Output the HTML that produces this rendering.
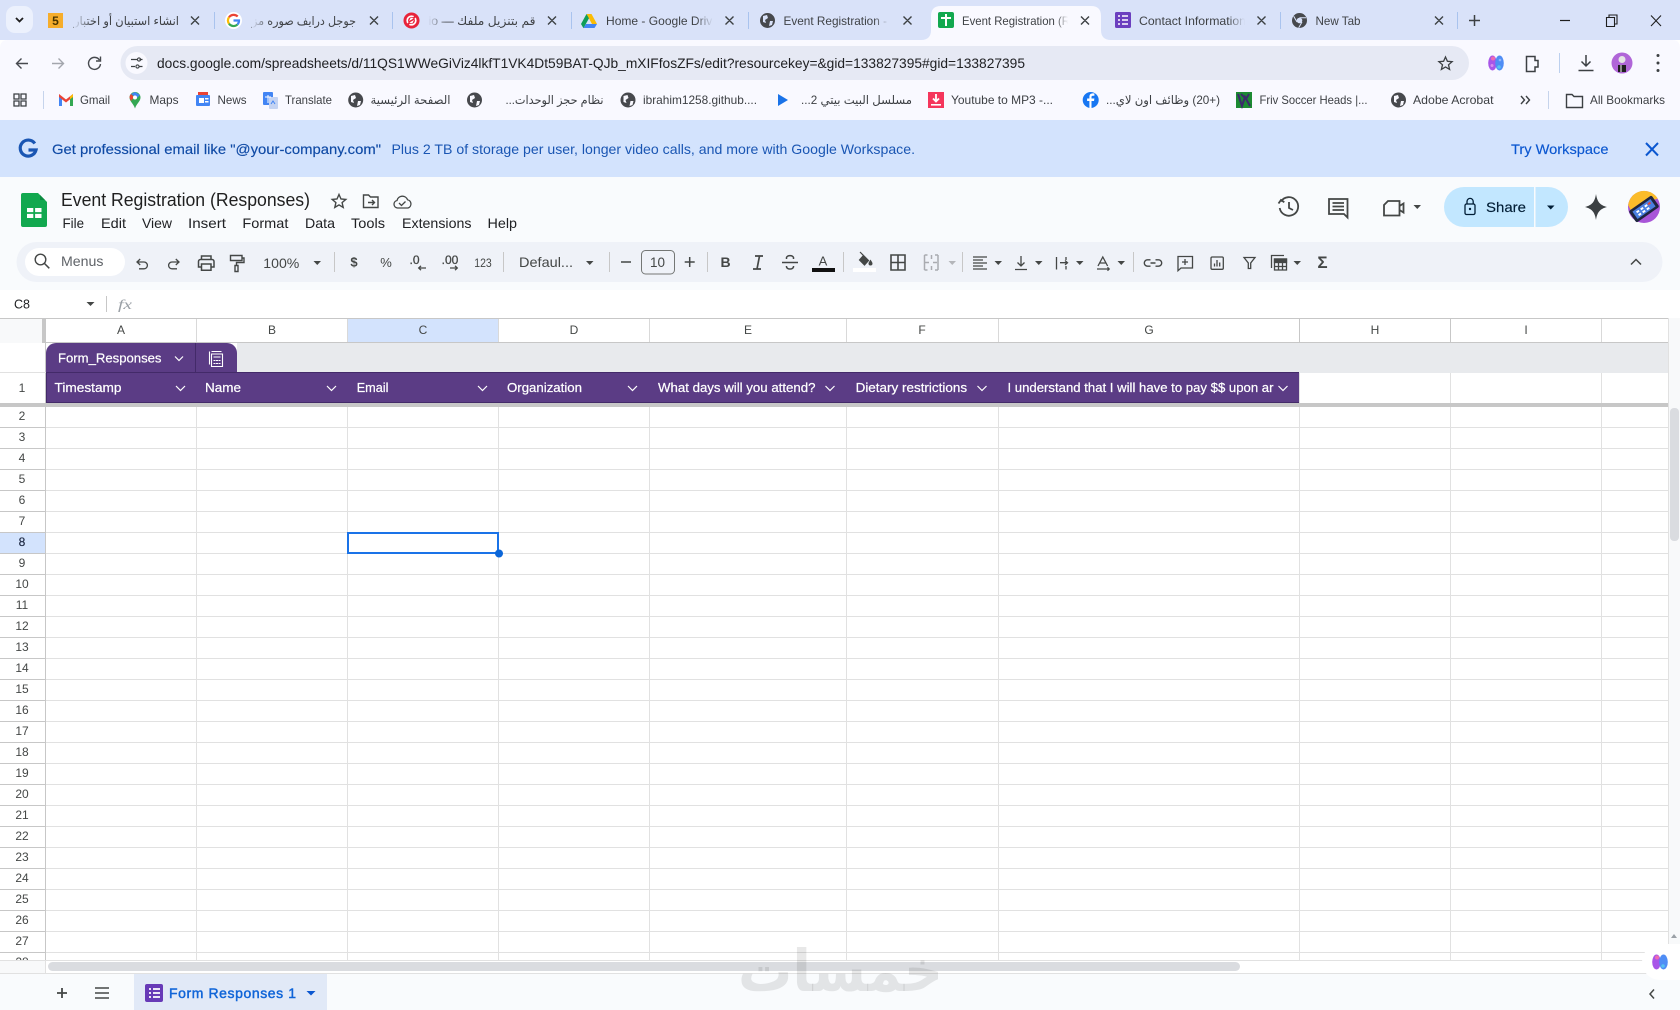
<!DOCTYPE html>
<html lang="en"><head><meta charset="utf-8"><title>Event Registration (Responses)</title>
<style>
html,body{margin:0;padding:0;background:#fff;width:1680px;height:1010px;overflow:hidden}
svg{display:block;font-family:"Liberation Sans","DejaVu Sans","Noto Sans CJK SC",sans-serif}
.tb{font-size:12px;fill:#3f4246}
.bm{font-size:12px;fill:#3c3f43}
.ar{direction:rtl}
.m{stroke:currentColor;stroke-width:.15}
.hd{font-size:13px;fill:#fff;stroke:#fff;stroke-width:.22}
.mn{font-size:14px;fill:#202124}
.rn{font-size:12px;fill:#444746;text-anchor:middle}
.ic{fill:none;stroke:#444746;stroke-width:1.3}
.tl{fill:#444746;text-anchor:middle}
</style></head><body>
<svg width="1680" height="1010" viewBox="0 0 1680 1010" xmlns="http://www.w3.org/2000/svg">
<defs>
<linearGradient id="fs" x1="0" x2="1" y1="0" y2="0"><stop offset="0" stop-color="#d9e2f9" stop-opacity="0"/><stop offset="1" stop-color="#d9e2f9"/></linearGradient>
<linearGradient id="fl" x1="1" x2="0" y1="0" y2="0"><stop offset="0" stop-color="#d9e2f9" stop-opacity="0"/><stop offset="1" stop-color="#d9e2f9"/></linearGradient>
<linearGradient id="fa" x1="0" x2="1" y1="0" y2="0"><stop offset="0" stop-color="#f9f9ff" stop-opacity="0"/><stop offset="1" stop-color="#f9f9ff"/></linearGradient>
<clipPath id="gridclip"><rect x="0" y="318" width="1680" height="642"/></clipPath>
</defs>

<!-- chrome strip -->
<rect width="1680" height="40" fill="#d9e2f9"/>
<rect x="6" y="6" width="27" height="27" rx="9" fill="#ecf1fd"/>
<path d="M16 18l3.500 3.500L23 18" fill="none" stroke="#1f1f1f" stroke-width="1.800"/>
<path d="M214.500 12v17M392.500 12v17M571.500 12v17M748.500 12v17M1280.500 12v17M1457.500 12v17" stroke="#a9c3ee" stroke-width="1"/>
<!-- active tab -->
<path d="M921 40q10 0 10-10V16q0-10 10-10h150q10 0 10 10v14q0 10 10 10z" fill="#f9f9ff"/>
<!-- toolbar -->
<path d="M0 120V48q0-8 8-8h1664q8 0 8 8v72z" fill="#f9f9ff"/>
<rect x="120.500" y="46" width="1348.500" height="34" rx="17" fill="#e6e9f4"/>

<!-- tab favicons -->
<rect x="48" y="13" width="15" height="15" fill="#f6ad2b"/>
<text x="55.500" y="25" font-size="12" font-weight="bold" text-anchor="middle" fill="#4a3500">5</text>
<circle cx="233.500" cy="20.500" r="8.500" fill="#fff"/>
<g fill="none" stroke-width="2.200">
<path d="M237.700 16.500A5.700 5.700 0 0 0 229 17.300" stroke="#ea4335"/>
<path d="M229 17.300A5.700 5.700 0 0 0 229 23.700" stroke="#fbbc05"/>
<path d="M229 23.700A5.700 5.700 0 0 0 237.500 24.500" stroke="#34a853"/>
<path d="M237.500 24.500A5.700 5.700 0 0 0 239 20.500H233.500" stroke="#4285f4"/>
</g>
<circle cx="411.500" cy="20.500" r="8" fill="#e8233a"/>
<circle cx="411.500" cy="20.500" r="4.300" fill="none" stroke="#fff" stroke-width="1.700"/>
<path d="M407 25.500l9-10" stroke="#e8233a" stroke-width="2"/>
<path d="M409 21l1.800-3.500 2.800 1zM414 20l-1.800 3.500-2.800-1z" fill="#fff"/>
<path d="M586.500 14h5l5.500 10h-5z" fill="#fbbc05"/>
<path d="M586.500 14l-5.500 10 2.500 4.200 5.500-10z" fill="#0f9d58"/>
<path d="M583.500 28h11l2.500-4h-11z" fill="#4285f4"/>
<circle cx="767.500" cy="20.500" r="7.500" fill="#47494d"/>
<path d="M763 16l4-1 1 3-3 2 1 3-3-1zM770 21l3 0-1 4-3 1z" fill="#d9e2f9"/>
<rect x="938" y="12" width="16" height="16" rx="2" fill="#12a84f"/>
<path d="M946 14v12M941 18h10" stroke="#fff" stroke-width="2"/>
<rect x="1115" y="12" width="16" height="16" rx="1.500" fill="#6b3fbf"/>
<path d="M1118 16h2M1122 16h6M1118 20h2M1122 20h6M1118 24h2M1122 24h6" stroke="#fff" stroke-width="1.500"/>
<circle cx="1299.500" cy="20.500" r="7.500" fill="#47494d"/>
<circle cx="1299.500" cy="20.500" r="2.800" fill="#d9e2f9"/>
<path d="M1299.500 17.700h6.500M1297 22l-3.300-5.700M1302 22l-3.300 5.700" stroke="#d9e2f9" stroke-width="1"/>

<!-- tab texts -->
<text class="tb ar" x="179" y="25" textLength="105" lengthAdjust="spacingAndGlyphs" font-size="11">انشاء استبيان أو اختبار</text>
<rect x="74" y="10" width="18" height="22" fill="url(#fl)"/>
<text class="tb ar" x="356" y="25" textLength="104" lengthAdjust="spacingAndGlyphs">جوجل درايف صوره مز</text>
<rect x="252" y="10" width="18" height="22" fill="url(#fl)"/>
<text class="tb ar" x="535.500" y="25" textLength="107" lengthAdjust="spacingAndGlyphs">قم بتنزيل ملفك — io</text>
<rect x="428" y="10" width="18" height="22" fill="url(#fl)"/>
<text class="tb" x="606" y="25" textLength="113" lengthAdjust="spacingAndGlyphs">Home - Google Drive</text>
<rect x="696" y="10" width="17" height="22" fill="url(#fs)"/><rect x="713" y="10" width="8" height="22" fill="#d9e2f9"/>
<text class="tb" x="783.500" y="25" textLength="103.500" lengthAdjust="spacingAndGlyphs">Event Registration -</text>
<rect x="874" y="10" width="15" height="22" fill="url(#fs)"/>
<text class="tb" x="962" y="25" textLength="108" lengthAdjust="spacingAndGlyphs">Event Registration (R</text>
<rect x="1056" y="10" width="12" height="22" fill="url(#fa)"/><rect x="1068" y="10" width="6" height="22" fill="#f9f9ff"/>
<text class="tb" x="1139" y="25" textLength="107" lengthAdjust="spacingAndGlyphs">Contact Information</text>
<rect x="1228" y="10" width="17" height="22" fill="url(#fs)"/><rect x="1245" y="10" width="6" height="22" fill="#d9e2f9"/>
<text class="tb" x="1315.500" y="25" textLength="45" lengthAdjust="spacingAndGlyphs">New Tab</text>
<!-- closes -->
<path d="M191 16.500l8 8m0-8l-8 8M370 16.500l8 8m0-8l-8 8M548 16.500l8 8m0-8l-8 8M725.500 16.500l8 8m0-8l-8 8M903.500 16.500l8 8m0-8l-8 8M1081 16.500l8 8m0-8l-8 8M1257.500 16.500l8 8m0-8l-8 8M1435 16.500l8 8m0-8l-8 8" stroke="#3c4043" stroke-width="1.400" fill="none"/>
<path d="M1469 20.500h11M1474.500 15v11" stroke="#3c4043" stroke-width="1.500"/>
<path d="M1560 20.500h10" stroke="#1f1f1f" stroke-width="1.200"/>
<path d="M1606.500 17.500h8v9h-8zM1609 17.500v-2.500h8v9h-2.500" fill="none" stroke="#1f1f1f" stroke-width="1.100"/>
<path d="M1651 15.500l10 10.500m0-10.500l-10 10.500" stroke="#1f1f1f" stroke-width="1.100"/>

<!-- nav icons -->
<path d="M28 63.500H16.500M21.500 58.500l-5 5 5 5" fill="none" stroke="#474a4f" stroke-width="1.400"/>
<path d="M52 63.500h11.500M58.500 58.500l5 5-5 5" fill="none" stroke="#a3a6ad" stroke-width="1.400"/>
<path d="M99.500 60a6 6 0 1 0 1 4M100.500 56.500v4.500h-4.500" fill="none" stroke="#474a4f" stroke-width="1.400"/>
<circle cx="136.500" cy="63" r="11" fill="#f9f9ff"/>
<path d="M131 59.500h6M131 66.500h4M139.500 59.500h3M139.500 66.500h3" stroke="#3c4043" stroke-width="1.200"/>
<circle cx="139" cy="59.500" r="1.600" fill="none" stroke="#3c4043" stroke-width="1.100"/>
<circle cx="137.500" cy="66.500" r="1.600" fill="none" stroke="#3c4043" stroke-width="1.100"/>
<text x="157" y="68" font-size="14" fill="#202124" textLength="868" lengthAdjust="spacingAndGlyphs">docs.google.com/spreadsheets/d/11QS1WWeGiViz4lkfT1VK4Dt59BAT-QJb_mXIFfosZFs/edit?resourcekey=&amp;gid=133827395#gid=133827395</text>
<path d="M1445.500 57l1.900 4.300 4.700.4-3.600 3.100 1.100 4.600-4.100-2.400-4.100 2.400 1.100-4.600-3.600-3.100 4.700-.4z" fill="none" stroke="#3c4043" stroke-width="1.300"/>
<!-- brain ext -->
<ellipse cx="1492.500" cy="63" rx="4.300" ry="7.500" fill="#a855e8"/><ellipse cx="1499.500" cy="63" rx="4.300" ry="7.500" fill="#4f8df5"/><circle cx="1493" cy="58.500" r="2" fill="#ef6bb0"/><circle cx="1499" cy="67" r="1.800" fill="#57c2f0"/><circle cx="1492" cy="65.500" r="1.500" fill="#d98cf0"/><circle cx="1500" cy="60" r="1.300" fill="#8fb4fa"/>
<path d="M1526.500 56.500h8.500v4h3v6.500h-3v4.500h-8.500z" fill="none" stroke="#3c4043" stroke-width="1.500"/>
<path d="M1559.500 53v20" stroke="#bcd0ef"/>
<path d="M1586 55v11M1581.500 61.500l4.500 4.500 4.500-4.500M1578.500 70.500h15" fill="none" stroke="#3c4043" stroke-width="1.500"/>
<circle cx="1622" cy="63" r="10.500" fill="#b066d8"/>
<circle cx="1622" cy="59.500" r="3.500" fill="#e5e5e5"/>
<path d="M1618 72v-7h8v7z" fill="#1f1f1f"/><path d="M1621 65v7" stroke="#fff"/>
<circle cx="1658" cy="55.500" r="1.500" fill="#3c4043"/><circle cx="1658" cy="63" r="1.500" fill="#3c4043"/><circle cx="1658" cy="70.500" r="1.500" fill="#3c4043"/>

<!-- bookmarks -->
<path d="M14 94h5v5h-5zM21 94h5v5h-5zM14 101h5v5h-5zM21 101h5v5h-5z" fill="none" stroke="#3c4043" stroke-width="1.300"/>
<path d="M43.500 91v18M1548.500 91v18" stroke="#c6d4ec"/>
<!-- gmail -->
<path d="M59 94v12h3v-7.500z" fill="#4285f4"/><path d="M73 94v12h-3v-7.500z" fill="#34a853"/><path d="M59 94l7 5.500 7-5.500v3l-7 5.500-7-5.500z" fill="#ea4335"/><path d="M70 96.500l3-2.500v3l-3 2.300z" fill="#fbbc05"/>
<text class="bm" x="80" y="104" textLength="30" lengthAdjust="spacingAndGlyphs">Gmail</text>
<!-- maps -->
<path d="M135 92a5.500 5.500 0 0 1 5.500 5.500c0 4-4 6-5.500 11-1.500-5-5.500-7-5.500-11A5.500 5.500 0 0 1 135 92z" fill="#34a853"/>
<path d="M131 94l4-2 5 3-3 3z" fill="#4285f4"/><path d="M129.500 97.500a5 5 0 0 1 1.500-3.500l3 3-3 4z" fill="#ea4335"/><circle cx="135" cy="97.500" r="2" fill="#fff"/>
<text class="bm" x="149.500" y="104" textLength="29" lengthAdjust="spacingAndGlyphs">Maps</text>
<!-- news -->
<rect x="196" y="95" width="14" height="11" rx="1" fill="#4285f4"/><rect x="198" y="92" width="10" height="3" fill="#ea4335"/><rect x="199" y="98" width="5" height="5" fill="#fff"/><rect x="205" y="98" width="3.500" height="1.500" fill="#fff"/><rect x="205" y="101" width="3.500" height="1.500" fill="#fff"/>
<text class="bm" x="217.500" y="104" textLength="29" lengthAdjust="spacingAndGlyphs">News</text>
<!-- translate -->
<rect x="263" y="92" width="10" height="13" rx="1" fill="#4285f4"/><rect x="269" y="97" width="9" height="12" rx="1" fill="#c4d3f2"/><path d="M265 97h6M268 95v8" stroke="#fff"/><path d="M271 104l2-3 2 3" stroke="#4285f4" fill="none"/>
<text class="bm" x="285" y="104" textLength="47" lengthAdjust="spacingAndGlyphs">Translate</text>
<!-- globes -->
<circle cx="355.700" cy="100" r="7.500" fill="#47494d"/><path d="M351 96l4-1 1 3-3 2 1 3-3-1zM358 101l3 0-1 4-3 1z" fill="#f9f9ff"/>
<text class="bm ar" x="450.500" y="104" textLength="80" lengthAdjust="spacingAndGlyphs">الصفحة الرئيسية</text>
<circle cx="474.500" cy="100" r="7.500" fill="#47494d"/><path d="M470 96l4-1 1 3-3 2 1 3-3-1zM477 101l3 0-1 4-3 1z" fill="#f9f9ff"/>
<text class="bm ar" x="603.500" y="104" textLength="98" lengthAdjust="spacingAndGlyphs">نظام حجز الوحدات...</text>
<circle cx="628" cy="100" r="7.500" fill="#47494d"/><path d="M623.500 96l4-1 1 3-3 2 1 3-3-1zM630.500 101l3 0-1 4-3 1z" fill="#f9f9ff"/>
<text class="bm" x="643" y="104" textLength="114" lengthAdjust="spacingAndGlyphs">ibrahim1258.github....</text>
<path d="M778 94l10 6-10 6z" fill="#1a73e8"/>
<text class="bm ar" x="912" y="104" textLength="111" lengthAdjust="spacingAndGlyphs">مسلسل البيت بيتي 2...</text>
<rect x="928" y="92" width="16" height="16" fill="#f5365c"/><path d="M936 94v7M933 98.500l3 3 3-3" stroke="#fff" stroke-width="1.800" fill="none"/><rect x="931" y="104" width="10" height="1.600" fill="#fff"/>
<text class="bm" x="951" y="104" textLength="102" lengthAdjust="spacingAndGlyphs">Youtube to MP3 -...</text>
<circle cx="1090.700" cy="100" r="8" fill="#1877f2"/><path d="M1091.500 108v-7h2.500l.4-2.500h-2.900v-1.500c0-.8.400-1.300 1.400-1.300h1.500v-2.200c-2.800-.5-5 .3-5 3.200v1.800h-2.300v2.500h2.300v7z" fill="#fff"/>
<text class="bm ar" x="1220" y="104" textLength="114" lengthAdjust="spacingAndGlyphs">(+20) وظائف اون لاي...</text>
<rect x="1236" y="92" width="16" height="16" fill="#1c8a32"/><path d="M1238 94l4 12 3-9 5 9M1241 94l5 5 3-5" fill="none" stroke="#3b2a6b" stroke-width="2"/>
<text class="bm" x="1259.500" y="104" textLength="108" lengthAdjust="spacingAndGlyphs">Friv Soccer Heads |...</text>
<circle cx="1398.500" cy="100" r="7.500" fill="#47494d"/><path d="M1394 96l4-1 1 3-3 2 1 3-3-1zM1401 101l3 0-1 4-3 1z" fill="#f9f9ff"/>
<text class="bm" x="1413" y="104" textLength="80.500" lengthAdjust="spacingAndGlyphs">Adobe Acrobat</text>
<path d="M1521 96l3.500 4-3.500 4M1526 96l3.500 4-3.500 4" fill="none" stroke="#3c4043" stroke-width="1.400"/>
<path d="M1566.500 94.500h5.500l2 2h8.500v11h-16z" fill="none" stroke="#3c4043" stroke-width="1.400"/>
<text class="bm" x="1590" y="104" textLength="75" lengthAdjust="spacingAndGlyphs">All Bookmarks</text>

<!-- banner -->
<rect y="120" width="1680" height="57" fill="#d3e3fd"/>
<path d="M34.800 143.500A8 8 0 1 0 36 150H28.500" fill="none" stroke="#1a56b3" stroke-width="3.200"/>
<text class="m" x="52" y="154" font-size="14" fill="#0f4aa5" color="#0f4aa5" textLength="329" lengthAdjust="spacingAndGlyphs">Get professional email like "@your-company.com"</text>
<text x="391.500" y="154" font-size="14" fill="#1a56b3" textLength="523.500" lengthAdjust="spacingAndGlyphs">Plus 2 TB of storage per user, longer video calls, and more with Google Workspace.</text>
<text class="m" x="1511" y="154" font-size="14" fill="#0b57d0" color="#0b57d0" textLength="97.500" lengthAdjust="spacingAndGlyphs">Try Workspace</text>
<path d="M1646 143l12 12.500m0-12.500l-12 12.500" stroke="#0b57d0" stroke-width="2"/>

<!-- sheets header -->
<rect y="177" width="1680" height="113" fill="#f9fbfd"/>
<path d="M23 193h15l9 9v23a2 2 0 0 1-2 2H23a2 2 0 0 1-2-2v-30a2 2 0 0 1 2-2z" fill="#12a84f"/>
<path d="M40 195v5h5z" fill="#0c8a41"/>
<rect x="27" y="208" width="14.500" height="10" fill="#fff"/><path d="M34.200 208v10M27 213h14.500" stroke="#12a84f" stroke-width="1.800"/>
<text x="61" y="206" font-size="18" fill="#1f1f1f" textLength="249" lengthAdjust="spacingAndGlyphs">Event Registration (Responses)</text>
<path d="M339 194.500l2 4.500 4.800.4-3.700 3.200 1.100 4.800-4.200-2.500-4.200 2.500 1.100-4.800-3.700-3.200 4.800-.4z" fill="none" stroke="#444746" stroke-width="1.400"/>
<path d="M363.500 195h5l2 2h7.500v10.500h-14.500zM368 202.500h6M372 200l2.500 2.500-2.500 2.500" fill="none" stroke="#444746" stroke-width="1.400"/>
<path d="M399 208h-1.500a3.800 3.800 0 0 1-.5-7.500 5.500 5.500 0 0 1 10.500-.8 4.300 4.300 0 0 1 .5 8.300zM399 203l2.500 2.500 4-4" fill="none" stroke="#444746" stroke-width="1.300"/>
<text class="mn" x="62.500" y="228" textLength="21.500" lengthAdjust="spacingAndGlyphs">File</text>
<text class="mn" x="101" y="228" textLength="25" lengthAdjust="spacingAndGlyphs">Edit</text>
<text class="mn" x="142" y="228" textLength="30" lengthAdjust="spacingAndGlyphs">View</text>
<text class="mn" x="188" y="228" textLength="38" lengthAdjust="spacingAndGlyphs">Insert</text>
<text class="mn" x="242.400" y="228" textLength="46" lengthAdjust="spacingAndGlyphs">Format</text>
<text class="mn" x="305" y="228" textLength="30" lengthAdjust="spacingAndGlyphs">Data</text>
<text class="mn" x="351" y="228" textLength="34" lengthAdjust="spacingAndGlyphs">Tools</text>
<text class="mn" x="402" y="228" textLength="69.500" lengthAdjust="spacingAndGlyphs">Extensions</text>
<text class="mn" x="487.500" y="228" textLength="29.500" lengthAdjust="spacingAndGlyphs">Help</text>

<!-- top right -->
<path d="M1281 201.500a9.300 9.300 0 1 1-1.300 6.500M1278.500 203.500l2.500-3.500 3.300 2.200M1289 202v6l4 2" fill="none" stroke="#444746" stroke-width="1.800"/>
<path d="M1329 199h18.500v18.500l-3.500-3.500h-15zM1332.500 203h11.500M1332.500 206.500h11.500M1332.500 210h11.500" fill="none" stroke="#444746" stroke-width="1.800"/>
<path d="M1388 201h11.500v14.500h-15.500v-10.500zM1399.500 206l4-2.500v9l-4-2.500" fill="none" stroke="#444746" stroke-width="1.800"/>
<path d="M1413.500 205h7.500l-3.700 4z" fill="#444746"/>
<path d="M1464 187h70v40h-70a20 20 0 0 1 0-40z" fill="#c2e7ff"/>
<path d="M1535 187h13a20 20 0 0 1 0 40h-13z" fill="#c2e7ff"/>
<rect x="1534" y="187" width="1.500" height="40" fill="#f9fbfd"/>
<rect x="1465" y="204" width="10" height="10.500" rx="1.500" fill="none" stroke="#001d35" stroke-width="1.300"/>
<path d="M1467 204v-2.500a3.100 3.100 0 0 1 6.200 0v2.500" fill="none" stroke="#001d35" stroke-width="1.300"/>
<circle cx="1470" cy="209" r="1.200" fill="#001d35"/>
<text class="m" x="1486" y="212" font-size="14" fill="#001d35" color="#001d35" textLength="40" lengthAdjust="spacingAndGlyphs">Share</text>
<path d="M1547 205.500h7.500l-3.750 4z" fill="#001d35"/>
<path d="M1596 194c1.200 7.500 3.500 11 11 13-7.500 2-9.800 5.500-11 13-1.200-7.500-3.500-11-11-13 7.500-2 9.800-5.500 11-13z" fill="#3c4043"/>
<circle cx="1644" cy="207" r="16" fill="#a855d8"/>
<path d="M1628.200 205a16 16 0 0 1 29.500-6.500L1640 205l-8 8z" fill="#fbbc2a"/>
<g transform="rotate(-35 1644 209)">
<rect x="1630" y="202" width="28" height="14" rx="2" fill="#1f2540"/>
<rect x="1633" y="204.500" width="22" height="9" fill="#4a7fe0"/>
<path d="M1636 206.500h3v2h-3zM1641 206.500h3v2h-3zM1646 206.500h3v2h-3zM1636 210h3v2h-3zM1641 210h3v2h-3zM1646 210h3v2h-3z" fill="#fff"/>
<path d="M1650 206.500h3v2h-3z" fill="#e8433a"/>
</g>

<!-- toolbar -->
<rect x="16.500" y="242" width="1646" height="40" rx="20" fill="#eff2f8"/>
<rect x="25" y="248" width="100" height="28" rx="14" fill="#fff"/>
<circle cx="40.500" cy="259.500" r="5.300" fill="none" stroke="#444746" stroke-width="1.400"/><path d="M44.500 263.500l4.800 4.800" stroke="#444746" stroke-width="1.500"/>
<text x="61" y="266" font-size="14" fill="#5f6368" textLength="42.500" lengthAdjust="spacingAndGlyphs">Menus</text>
<g class="ic">
<path d="M137 262h7a3.400 3.400 0 0 1 0 6.800h-5M140.200 259l-3.200 3 3.200 3"/>
<path d="M179 262h-7a3.400 3.400 0 0 0 0 6.800h5M175.800 259l3.200 3-3.200 3"/>
<path d="M201.500 259.500v-3.500h9.500v3.500M201.500 267h-3v-5.500a2 2 0 0 1 2-2h11.500a2 2 0 0 1 2 2v5.500h-3M201.500 264h9.500v6.300h-9.500z" stroke-width="1.500"/>
<path d="M230.500 255.500h11.500v5h-11.500zM242 258h2v4.500h-7.500v3M235 265.500h3v6h-3z" stroke-width="1.400"/>
<path d="M973 257h14M973 260h10M973 263h14M973 266h10M973 269h14" stroke-width="1.200"/>
<path d="M1021 256v10M1017.500 262.500l3.500 3.500 3.500-3.500M1015 269.500h12"/>
<path d="M1056.500 257v12.500M1066 257v3M1066 266v3.500M1060 262.700h7.500M1065 260.500l2.500 2.200-2.500 2.200"/>
<path d="M1098 266l4.800-9 4.800 9M1099.500 263h6.500M1097 269h12M1107.500 267.300l1.700 1.700-1.700 1.700"/>
<path d="M1150.500 259.800h-3a3.200 3.200 0 0 0 0 6.400h3M1155.500 259.800h3a3.200 3.200 0 0 1 0 6.400h-3M1150.500 263h5" stroke-width="1.400"/>
<path d="M1178 256.500h14.500v11.500h-11.500l-3 2.700zM1185 259v6M1182 262h6"/>
<rect x="1211" y="257" width="12.300" height="12.300" rx="1.200"/>
<path d="M1214.500 266.500v-3M1217 266.500v-6.500M1219.700 266.500v-4"/>
<path d="M1244 257.500h11l-4.300 5.500v5.500h-2.400v-5.500z"/>
<path d="M1271.500 268v-12.500h12.500"/>
<path d="M1274.500 259h12v11h-12zM1274.500 266.500h12M1278.500 263v7M1282.500 263v7"/>
<rect x="1274.500" y="259" width="12" height="3.500" fill="#444746"/>
<path d="M1631 264.500l5-5 5 5" stroke-width="1.500"/>
</g>
<path d="M334.500 252v20M503.500 252v20M609.500 252v20M707.500 252v20M843.500 252v20M962.500 252v20M1133.500 252v20" stroke="#c7c7c7"/>
<text class="tl" x="281.300" y="268" font-size="14" textLength="36" lengthAdjust="spacingAndGlyphs">100%</text>
<path d="M313.500 261h7.500l-3.750 4zM586 261h7.500l-3.750 4zM994.500 261h7.500l-3.750 4zM1035 261h7.500l-3.750 4zM1076 261h7.500l-3.750 4zM1117.500 261h7.500l-3.750 4zM1293.500 261h7.500l-3.750 4z" fill="#444746"/>
<path d="M948.500 261h7.500l-3.750 4z" fill="#b4b6ba"/>
<text class="tl" x="354" y="266.500" font-size="13" font-weight="bold">$</text>
<text class="tl" x="386" y="267" font-size="13">%</text>
<text class="tl" x="414.500" y="264" font-size="12" style="stroke:#444746;stroke-width:.3">.0</text>
<path d="M426 268h-7M421 265.800l-2.300 2.200 2.300 2.200" fill="none" stroke="#444746" stroke-width="1.300"/>
<text class="tl" x="450" y="264" font-size="12" style="stroke:#444746;stroke-width:.3">.00</text>
<path d="M450 268h7M455 265.800l2.300 2.200-2.300 2.200" fill="none" stroke="#444746" stroke-width="1.300"/>
<text class="tl" x="483" y="267" font-size="12" textLength="17.500" lengthAdjust="spacingAndGlyphs">123</text>
<text x="519" y="267" font-size="14" fill="#444746" textLength="54" lengthAdjust="spacingAndGlyphs">Defaul...</text>
<path d="M621 262h10M684.700 262h10M689.700 257v10" stroke="#444746" stroke-width="1.500"/>
<rect x="641.500" y="250.500" width="33" height="23.500" rx="4" fill="none" stroke="#747775"/>
<text class="tl" x="657.500" y="267" font-size="14" textLength="15" lengthAdjust="spacingAndGlyphs">10</text>
<text class="tl" x="725.600" y="267" font-size="14" font-weight="bold">B</text>
<path d="M755 256h8M753 269h8M759.500 256l-2.500 13" fill="none" stroke="#444746" stroke-width="1.700"/>
<path d="M782 262.500h16M793.500 259v-1.500c-1-2.500-6-2.500-7 0v1.500M786.500 266v1c1 2.700 6 2.700 7 0v-1" fill="none" stroke="#444746" stroke-width="1.500"/>
<text class="tl" x="823" y="265.500" font-size="13">A</text>
<rect x="812" y="268" width="23" height="4" fill="#111"/>
<path d="M860 252l8.500 8.500-4 4.500-5-5 3.500-4M859.500 260h8" fill="#444746" stroke="#444746" stroke-width="1.200"/>
<path d="M870.500 259.500c-1.200 2-2 3-2 4a2 2 0 0 0 4 0c0-1-.8-2-2-4z" fill="#444746"/>
<rect x="853" y="268" width="23" height="4" fill="#fff"/>
<path d="M891 255h14v15h-14zM898 255v15M891 262.500h14" fill="none" stroke="#444746" stroke-width="1.600"/>
<path d="M924.500 255h3M935 255h3M924.500 270h3M935 270h3M924.500 255v15M938 255v15M925 262.500h4M933 262.500h4M931.500 255v4M931.500 266v4" fill="none" stroke="#a9abb0" stroke-width="1.500"/>
<text x="1322.500" y="268" font-size="17" text-anchor="middle" fill="#444746" font-weight="bold">Σ</text>

<!-- formula bar -->
<rect y="290" width="1680" height="28" fill="#fff"/>
<text x="14" y="308.500" font-size="12.500" fill="#202124">C8</text>
<path d="M86.500 302h8l-4 4z" fill="#444746"/>
<path d="M106.500 296v16" stroke="#c7c7c7"/>
<text x="118" y="309" font-size="14" font-style="italic" font-family="Liberation Serif" fill="#9aa0a6" textLength="14" lengthAdjust="spacingAndGlyphs">fx</text>

<!-- grid -->
<rect y="318" width="1680" height="655" fill="#fff"/>
<rect x="0" y="319" width="46" height="24" fill="#f8f9fa"/>
<rect x="42" y="319" width="4" height="24" fill="#c7c7c7"/>
<rect x="348" y="319" width="150" height="23" fill="#d3e3fd"/>
<rect x="0" y="532" width="45" height="21" fill="#d3e3fd"/>
<rect x="237" y="343" width="1432" height="30" fill="#e8eaed"/>
<path d="M46 427.500H1669M46 448.500H1669M46 469.500H1669M46 490.500H1669M46 511.500H1669M46 532.500H1669M46 553.500H1669M46 574.500H1669M46 595.500H1669M46 616.500H1669M46 637.500H1669M46 658.500H1669M46 679.500H1669M46 700.500H1669M46 721.500H1669M46 742.500H1669M46 763.500H1669M46 784.500H1669M46 805.500H1669M46 826.500H1669M46 847.500H1669M46 868.500H1669M46 889.500H1669M46 910.500H1669M46 931.500H1669M46 952.500H1669" stroke="#e1e1e1"/>
<path d="M0 427.500H45M0 448.500H45M0 469.500H45M0 490.500H45M0 511.500H45M0 532.500H45M0 553.500H45M0 574.500H45M0 595.500H45M0 616.500H45M0 637.500H45M0 658.500H45M0 679.500H45M0 700.500H45M0 721.500H45M0 742.500H45M0 763.500H45M0 784.500H45M0 805.500H45M0 826.500H45M0 847.500H45M0 868.500H45M0 889.500H45M0 910.500H45M0 931.500H45M0 952.500H45" stroke="#c7c7c7"/>
<path d="M196.500 373V960M347.500 373V960M498.500 373V960M649.500 373V960M846.500 373V960M998.500 373V960M1299.500 373V960M1450.500 373V960M1601.500 373V960" stroke="#e1e1e1"/>
<path d="M196.500 319V343M347.500 319V343M498.500 319V343M649.500 319V343M846.500 319V343M998.500 319V343M1601.500 319V343" stroke="#d9d9d9"/>
<path d="M1299.500 319V343M1450.500 319V343" stroke="#c7c7c7"/>
<path d="M0 318.500H1669M46 342.500H1669M45.500 343V960" stroke="#c7c7c7"/>
<path d="M0 372.500H46" stroke="#e1e1e1"/>
<rect x="0" y="403" width="1669" height="4" fill="#c7c7c7"/>
<!-- column labels -->
<text class="rn" x="121" y="334">A</text><text class="rn" x="272" y="334">B</text><text class="rn" x="423" y="334">C</text><text class="rn" x="574" y="334">D</text><text class="rn" x="748" y="334">E</text><text class="rn" x="922" y="334">F</text><text class="rn" x="1149" y="334">G</text><text class="rn" x="1375" y="334">H</text><text class="rn" x="1526" y="334">I</text>
<!-- row labels -->
<g clip-path="url(#gridclip)">
<text class="rn" x="22" y="392">1</text><text class="rn" x="22" y="420">2</text><text class="rn" x="22" y="441">3</text><text class="rn" x="22" y="462">4</text><text class="rn" x="22" y="483">5</text><text class="rn" x="22" y="504">6</text><text class="rn" x="22" y="525">7</text><text class="rn" x="22" y="546" style="fill:#1f2a44;stroke:#1f2a44;stroke-width:.2">8</text><text class="rn" x="22" y="567">9</text><text class="rn" x="22" y="588">10</text><text class="rn" x="22" y="609">11</text><text class="rn" x="22" y="630">12</text><text class="rn" x="22" y="651">13</text><text class="rn" x="22" y="672">14</text><text class="rn" x="22" y="693">15</text><text class="rn" x="22" y="714">16</text><text class="rn" x="22" y="735">17</text><text class="rn" x="22" y="756">18</text><text class="rn" x="22" y="777">19</text><text class="rn" x="22" y="798">20</text><text class="rn" x="22" y="819">21</text><text class="rn" x="22" y="840">22</text><text class="rn" x="22" y="861">23</text><text class="rn" x="22" y="882">24</text><text class="rn" x="22" y="903">25</text><text class="rn" x="22" y="924">26</text><text class="rn" x="22" y="945">27</text><text class="rn" x="22" y="966">28</text>
</g>
<!-- table chip -->
<path d="M46 373v-20a10 10 0 0 1 10-10h171a10 10 0 0 1 10 10v20z" fill="#5b3c85"/>
<path d="M195.500 343v30" stroke="#432a69"/>
<text class="hd" x="58" y="362.500" textLength="103.500" lengthAdjust="spacingAndGlyphs">Form_Responses</text>
<path d="M175 356.500l4 4 4-4" fill="none" stroke="#fff" stroke-width="1.200"/>
<path d="M209.500 351.500v13M211.500 351.500h10M211.500 354h11v12.500h-11zM213.500 357h7M213.500 360.500h2M216 360.500h2M218.500 360.500h2M213.500 363.500h2M216 363.500h2M218.500 363.500h2" fill="none" stroke="#fff" stroke-width="1.100"/>
<rect x="46" y="372" width="1253" height="31" fill="#5b3c85"/>
<path d="M46 372.500H1299M46 402.500H1299M46.500 372V403" stroke="#432a69"/>
<text class="hd" x="54.500" y="392" textLength="67" lengthAdjust="spacingAndGlyphs">Timestamp</text>
<text class="hd" x="205" y="392" textLength="36" lengthAdjust="spacingAndGlyphs">Name</text>
<text class="hd" x="356.700" y="392" textLength="31.700" lengthAdjust="spacingAndGlyphs">Email</text>
<text class="hd" x="507" y="392" textLength="75" lengthAdjust="spacingAndGlyphs">Organization</text>
<text class="hd" x="658" y="392" textLength="157.500" lengthAdjust="spacingAndGlyphs">What days will you attend?</text>
<text class="hd" x="855.600" y="392" textLength="111.500" lengthAdjust="spacingAndGlyphs">Dietary restrictions</text>
<text class="hd" x="1007.500" y="392" textLength="266" lengthAdjust="spacingAndGlyphs">I understand that I will have to pay $$ upon ar</text>
<path d="M176 386l4.500 4.500 4.500-4.500M327 386l4.500 4.500 4.500-4.500M478 386l4.500 4.500 4.500-4.500M628 386l4.500 4.500 4.500-4.500M825.500 386l4.500 4.500 4.500-4.500M977.500 386l4.500 4.500 4.500-4.500M1278.500 386l4.500 4.500 4.500-4.500" fill="none" stroke="#fff" stroke-width="1.200"/>
<!-- selection -->
<rect x="348" y="533" width="150" height="20" fill="none" stroke="#1a73e8" stroke-width="2"/>
<circle cx="499" cy="553.500" r="4" fill="#0b66d8"/>

<!-- vertical scrollbar -->
<rect x="1669" y="318" width="11" height="655" fill="#f8f9fa"/>
<path d="M1668.500 318V960" stroke="#e1e1e1"/>
<rect x="1670" y="408" width="9" height="133" rx="4" fill="#dadce0"/>
<path d="M1671 938h6l-3-4z" fill="#9aa0a6"/>

<!-- horizontal scrollbar -->
<rect x="0" y="960" width="1669" height="13" fill="#fff"/>
<rect x="0" y="960" width="46" height="13" fill="#f8f9fa"/>
<path d="M0 960.500H1669M45.500 960v13" stroke="#e1e1e1"/>
<rect x="48" y="962" width="1192" height="9" rx="4.500" fill="#dadce0"/>

<!-- footer -->
<rect y="973" width="1680" height="37" fill="#f9fbfd"/>
<path d="M0 973.500H1680" stroke="#e1e1e1"/>
<path d="M57 993h10M62 988v10" stroke="#444746" stroke-width="1.800"/>
<path d="M95 988h14M95 993h14M95 998h14" stroke="#444746" stroke-width="1.500"/>
<rect x="134" y="974" width="193" height="36" fill="#e1e9f7"/>
<rect x="145" y="984" width="18" height="18" rx="2" fill="#673ab7"/>
<path d="M149 989h2M153 989h7M149 993h2M153 993h7M149 997h2M153 997h7" stroke="#fff" stroke-width="1.700"/>
<text x="169" y="998" font-size="14" fill="#1065d8" style="stroke:#1065d8;stroke-width:.45" textLength="127" lengthAdjust="spacing">Form Responses 1</text>
<path d="M306.500 991h9l-4.500 4.500z" fill="#0b57d0"/>
<!-- side panel bubble -->
<path d="M1680 944h-20a18 18 0 0 0 0 36h20z" fill="#fff"/>
<ellipse cx="1656.500" cy="962" rx="4.300" ry="7.500" fill="#a855e8"/><ellipse cx="1663.500" cy="962" rx="4.300" ry="7.500" fill="#4f8df5"/><circle cx="1657" cy="957.500" r="2" fill="#ef6bb0"/><circle cx="1663" cy="966" r="1.800" fill="#57c2f0"/>
<path d="M1654 989.500l-4 4.500 4 4.500" fill="none" stroke="#444746" stroke-width="1.500"/>
<!-- watermark -->
<text x="943" y="991" class="ar" font-size="58" font-weight="bold" fill="#000" fill-opacity=".09" textLength="205" lengthAdjust="spacingAndGlyphs">خمسات</text>
</svg>
</body></html>
